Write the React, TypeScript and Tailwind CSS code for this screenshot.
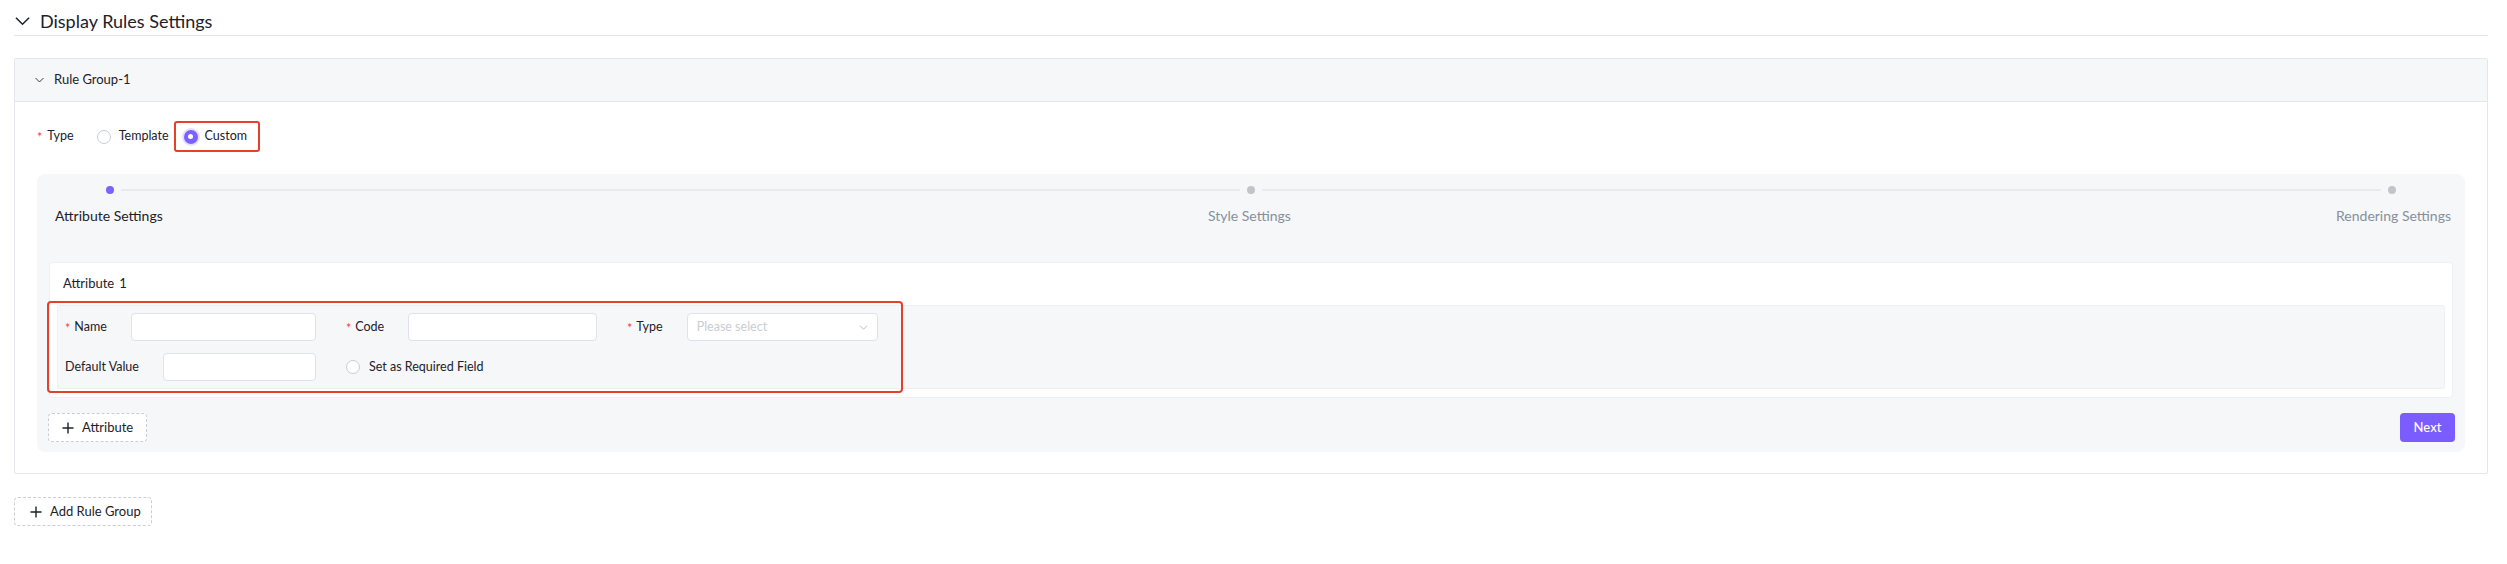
import React from "react";

const Chevron = ({ className }: { className?: string }) => (
  <svg viewBox="0 0 16 10" fill="none" className={className}>
    <path d="M1 1.5L8 8.5L15 1.5" stroke="currentColor" strokeWidth="1.6" />
  </svg>
);

const Plus = () => (
  <svg viewBox="0 0 12 12" className="size-[12px] text-[#1d2129]" fill="none">
    <path d="M6 0.5V11.5M0.5 6H11.5" stroke="currentColor" strokeWidth="1.4" />
  </svg>
);

const Star = () => (
  <span className="relative top-[2px] text-[#f53f3f]">*</span>
);

const App = () => {
  return (
    <div className="min-h-screen w-full bg-white pl-[14px] pr-[19px] font-['Lato',sans-serif] text-[#1d2129]">
      <div className="flex h-[36px] items-center gap-[10px] border-b border-[#e5e6eb] pl-[1px] pt-[6px]">
        <Chevron className="h-[10px] w-[15px] text-[#1d2129]" />
        <h2 className="text-[18px] leading-[24px]">Display Rules Settings</h2>
      </div>

      <div className="mt-[22px] rounded-[2px] border border-[#e5e6eb]">
        <div className="flex h-[43px] items-center gap-[10px] border-b border-[#e5e6eb] bg-[#f6f7f9] pl-[20px] text-[13px]">
          <Chevron className="h-[6px] w-[9px]" />
          <span>Rule Group-1</span>
        </div>

        <div className="px-[22px] pb-[21px] pt-[19px]">
          <TypeRow />
          <StepsPanel />
        </div>
      </div>

      <button className="mt-[23px] flex h-[29px] w-[138px] items-center gap-[8px] rounded-[4px] border border-dashed border-[#c9cdd4] bg-white pl-[15px] text-[13px] text-[#1d2129]">
        <Plus />
        Add Rule Group
      </button>
    </div>
  );
};

export default App;

//type selector
const TypeRow = () => {
  return (
    <div className="flex h-[31px] items-center text-[12.5px]">
      <Star />
      <span className="ml-[5px]">Type</span>
      <label className="ml-[23px] flex items-center gap-[8px]">
        <span className="size-[14px] rounded-full border border-[#c9cdd4] bg-white" />
        Template
      </label>
      <label className="ml-[5px] flex h-[31px] items-center gap-[5px] rounded-[3px] border-2 border-[#e5402a] pl-[6px] pr-[11px]">
        <span className="flex size-[18px] items-center justify-center rounded-full bg-[#e6e0ff]">
          <span className="flex size-[14px] items-center justify-center rounded-full bg-[#7b61ff]">
            <span className="size-[5px] rounded-full bg-white" />
          </span>
        </span>
        Custom
      </label>
    </div>
  );
};

const StepsPanel = () => {
  return (
    <div className="mt-[22px] rounded-[8px] bg-[#f6f7f9] px-[12px] pb-[10px] pt-[12px]">
      <div className="flex h-[8px] items-center px-[57px]">
        <span className="size-[8px] rounded-full bg-[#7b61ff]" />
        <span className="mx-[7px] h-[2px] flex-1 bg-[#e9eaef]" />
        <span className="size-[8px] rounded-full bg-[#c2c4cc]" />
        <span className="mx-[7px] h-[2px] flex-1 bg-[#e9eaef]" />
        <span className="size-[8px] rounded-full bg-[#c2c4cc]" />
      </div>
      <div className="mt-[12px] flex justify-between pl-[6px] pr-[2px] text-[14px] leading-[20px]">
        <span className="text-[#1d2129]">Attribute Settings</span>
        <span className="text-[#86909c]">Style Settings</span>
        <span className="text-[#86909c]">Rendering Settings</span>
      </div>

      <AttributeCard />

      <div className="-mx-px mt-[15px] flex items-center justify-between">
        <button className="flex h-[29px] w-[99px] items-center gap-[8px] rounded-[4px] border border-dashed border-[#c9cdd4] bg-white pl-[13px] text-[13px] text-[#1d2129]">
          <Plus />
          Attribute
        </button>
        <button className="-mr-px h-[29px] w-[55px] rounded-[4px] bg-[#7b5cff] text-[13px] font-medium text-white">
          Next
        </button>
      </div>
    </div>
  );
};

const AttributeCard = () => {
  return (
    <div className="relative mt-[36px] rounded-[4px] border border-[#eef0f3] bg-white pb-[8px] pt-[10px]">
      <div className="px-[13px] text-[13px] leading-[20px]">
        Attribute<span className="ml-[5px]">1</span>
      </div>
      <div className="mx-[7px] mt-[12px] grid grid-cols-[251px_251px_251px] gap-x-[30px] gap-y-[12px] rounded-[2px] border border-[#eef0f3] bg-[#f6f7f9] p-[7px] text-[12.5px]">
        <Field label="Name" required />
        <Field label="Code" required />
        <Field label="Type" required select />
        <Field label="Default Value" />
        <label className="flex h-[28px] items-center gap-[9px]">
          <span className="size-[14px] rounded-full border border-[#c9cdd4] bg-white" />
          Set as Required Field
        </label>
      </div>
      {/* highlight box */}
      <div className="pointer-events-none absolute left-[-3px] top-[38px] h-[92px] w-[856px] rounded-[4px] border-2 border-[#e5402a]" />
    </div>
  );
};

const Field = ({
  label,
  required,
  select,
}: {
  label: string;
  required?: boolean;
  select?: boolean;
}) => {
  return (
    <div className="flex h-[28px] items-center">
      {required && (
        <span className="mr-[4px]">
          <Star />
        </span>
      )}
      <span className="whitespace-nowrap">{label}</span>
      <div className="ml-[24px] flex h-[28px] flex-1 items-center rounded-[4px] border border-[#dfe2e8] bg-white pl-[9px] pr-[9px]">
        {select && (
          <>
            <span className="flex-1 text-[#c9cdd4]">Please select</span>
            <Chevron className="h-[5px] w-[9px] text-[#a9aeb8]" />
          </>
        )}
      </div>
    </div>
  );
};
